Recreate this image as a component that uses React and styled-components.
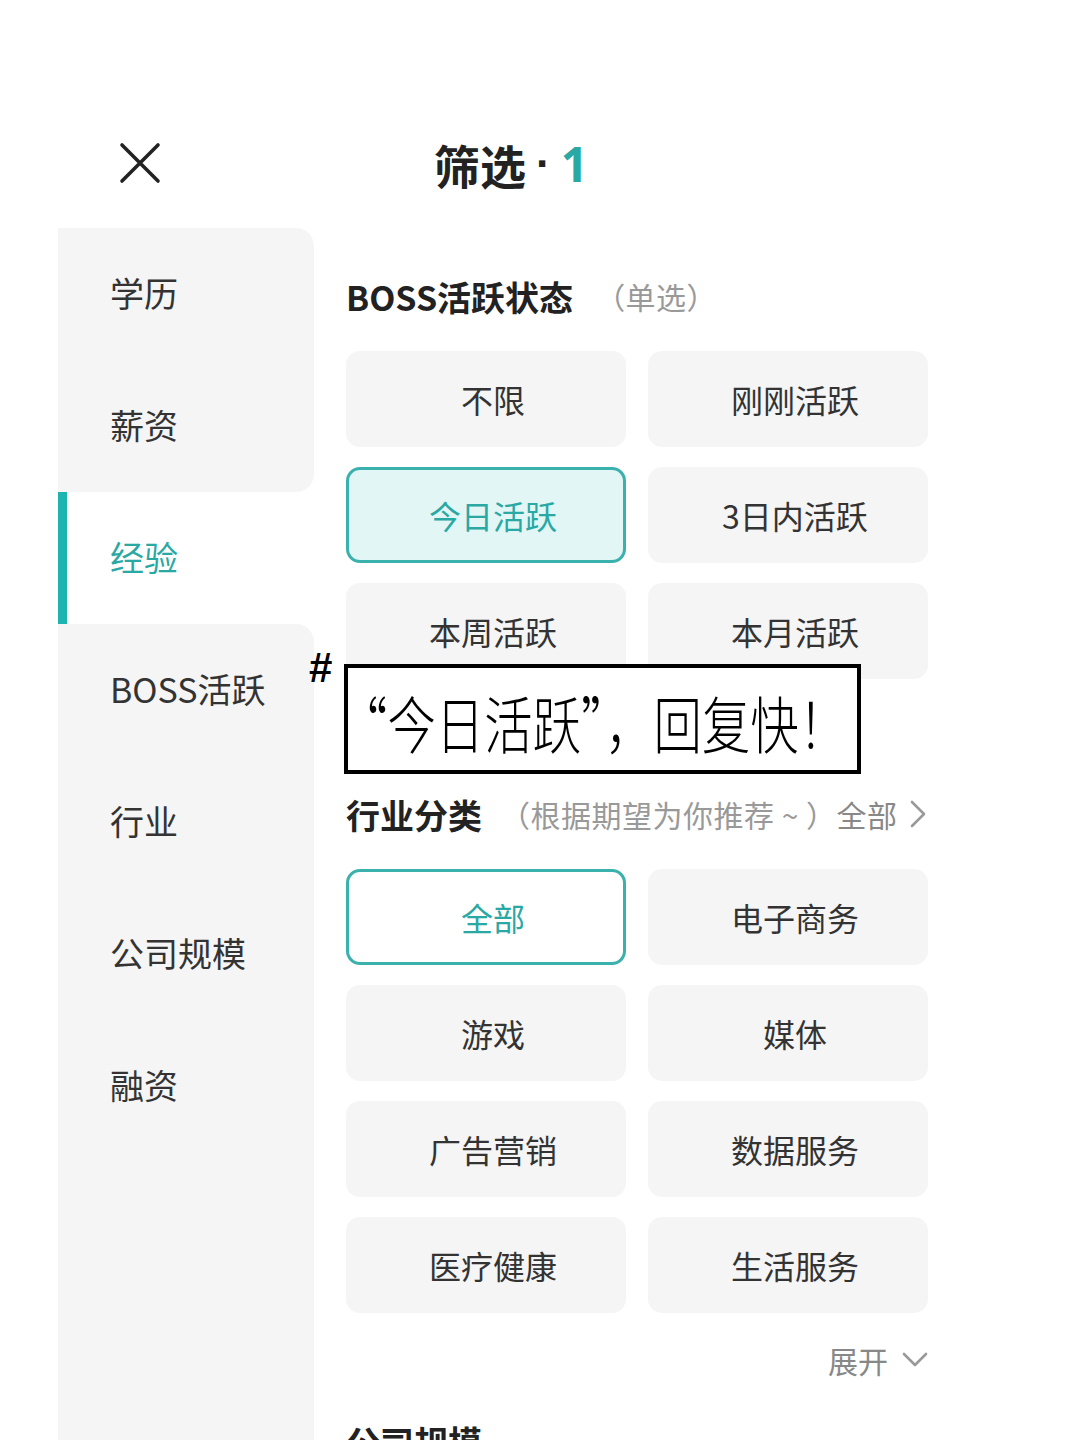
import React from "react";
import styled, { createGlobalStyle } from "styled-components";

const TEAL = "#2aa8a4";
const TEAL_BAR = "#1db3ae";

const Global = createGlobalStyle`
  html, body { margin: 0; padding: 0; background: #fff; }
  body {
    font-family: "Noto Sans CJK SC", "Noto Sans", sans-serif;
    height: 1440px;
    overflow: hidden;
  }
`;

const Page = styled.div`
  width: 1080px;
  height: 1440px;
  overflow: hidden;
  display: flex;
  flex-direction: column;
`;

const Header = styled.header`
  height: 228px;
  box-sizing: border-box;
  padding: 136px 0 0 118px;
  display: flex;
  align-items: flex-start;
`;

const CloseBtn = styled.button`
  width: 44px;
  height: 44px;
  padding: 0;
  border: none;
  background: none;
  display: flex;
  align-items: center;
  justify-content: center;
  margin-top: 5px;
`;

const Title = styled.h1`
  margin: 0 0 0 272px;
  font-size: 46px;
  line-height: 56px;
  font-weight: 700;
  color: #222;
  display: flex;
  align-items: center;
`;

const Dot = styled.span`
  margin: 0 10px 0 10px;
  font-family: "Liberation Sans", sans-serif;
  font-size: 44px;
`;

const Count = styled.span`
  color: ${TEAL};
  font-family: "Noto Sans", sans-serif;
  font-weight: 700;
  font-size: 48px;
`;

const Body = styled.div`
  flex: 1;
  display: flex;
  padding-left: 58px;
  min-height: 0;
`;

const Sidebar = styled.nav`
  width: 256px;
  display: flex;
  flex-direction: column;
  flex-shrink: 0;
`;

const NavItem = styled.div`
  height: 132px;
  box-sizing: border-box;
  display: flex;
  align-items: center;
  padding: 0 0 4px 52px;
  font-size: 34px;
  color: ${(p) => (p.$active ? TEAL : "#333")};
  background: ${(p) => (p.$active ? "#fff" : "#f5f5f5")};
  border-top-right-radius: ${(p) => (p.$roundTop ? "18px" : "0")};
  border-bottom-right-radius: ${(p) => (p.$roundBottom ? "18px" : "0")};
  position: relative;
  &::before {
    content: "";
    display: ${(p) => (p.$active ? "block" : "none")};
    position: absolute;
    left: 0;
    top: 0;
    bottom: 0;
    width: 9px;
    background: ${TEAL_BAR};
  }
`;

const NavFiller = styled.div`
  flex: 1;
  background: #f5f5f5;
`;

const Content = styled.main`
  width: 582px;
  margin-left: 32px;
  position: relative;
  padding-top: 47px;
`;

const Section = styled.section`
  margin-bottom: ${(p) => p.$mb || "0"};
`;

const SectionHead = styled.div`
  display: flex;
  align-items: center;
  height: 42px;
  margin-bottom: 34px;
`;

const SectionTitle = styled.h2`
  margin: 0;
  font-size: 34px;
  font-weight: 700;
  color: #222;
  white-space: nowrap;
`;

const Hint = styled.span`
  margin-left: ${(p) => p.$ml || "20px"};
  font-size: 30px;
  color: #999;
  white-space: nowrap;
  display: flex;
  align-items: center;
  letter-spacing: 0.5px;
`;

const HintLink = styled.span`
  color: #888;
  display: inline-flex;
  align-items: center;
  gap: 12px;
`;

const Grid = styled.div`
  display: grid;
  grid-template-columns: 280px 280px;
  column-gap: 22px;
  row-gap: 20px;
`;

const Option = styled.button`
  height: 96px;
  box-sizing: border-box;
  border-radius: 14px;
  border: 3px solid ${(p) => (p.$selected ? "#3bb1ad" : "transparent")};
  background: ${(p) =>
    p.$selected ? (p.$tint ? "#e2f6f5" : "#fff") : "#f5f5f5"};
  color: ${(p) => (p.$selected ? TEAL : "#333")};
  font-family: "Noto Sans CJK SC", "Noto Sans", sans-serif;
  font-size: 32px;
  padding: 0 0 0 14px;
  display: flex;
  align-items: center;
  justify-content: center;
`;

const ExpandRow = styled.div`
  display: flex;
  justify-content: flex-end;
  align-items: center;
  gap: 14px;
  height: 42px;
  margin-top: 26px;
  font-size: 30px;
  color: #888;
`;

const NextSection = styled.div`
  margin-top: 36px;
`;

const Note = styled.div`
  position: absolute;
  left: -2px;
  top: 436px;
  width: 517px;
  height: 110px;
  box-sizing: border-box;
  border: 4px solid #000;
  background: #fff;
  display: flex;
  align-items: center;
`;

const NoteText = styled.span`
  display: inline-block;
  margin-left: -9px;
  font-family: "Noto Sans CJK SC", sans-serif;
  font-weight: 300;
  font-size: 48.4px;
  line-height: 1;
  color: #000;
  white-space: nowrap;
  transform: scaleY(1.28);
  transform-origin: center;
  margin-top: 6px;
`;

const Hash = styled.span`
  position: absolute;
  left: -37px;
  top: 416px;
  font-family: "Liberation Sans", sans-serif;
  font-weight: 700;
  font-size: 42px;
  color: #000;
`;

const XIcon = () => (
  <svg width="44" height="44" viewBox="0 0 44 44">
    <path d="M4 4 L40 40 M40 4 L4 40" stroke="#222" strokeWidth="3.6" strokeLinecap="round" />
  </svg>
);

const Chevron = ({ dir }) =>
  dir === "right" ? (
    <svg width="16" height="28" viewBox="0 0 16 28">
      <path d="M2 2 L14 14 L2 26" fill="none" stroke="#999" strokeWidth="2.6" strokeLinecap="round" strokeLinejoin="round" />
    </svg>
  ) : (
    <svg width="26" height="16" viewBox="0 0 26 16">
      <path d="M2 2 L13 13 L24 2" fill="none" stroke="#999" strokeWidth="2.6" strokeLinecap="round" strokeLinejoin="round" />
    </svg>
  );

const navItems = ["学历", "薪资", "经验", "BOSS活跃", "行业", "公司规模", "融资"];
const activeIndex = 2;

const activity = ["不限", "刚刚活跃", "今日活跃", "3日内活跃", "本周活跃", "本月活跃"];
const industries = ["全部", "电子商务", "游戏", "媒体", "广告营销", "数据服务", "医疗健康", "生活服务"];

export default function App() {
  return (
    <Page>
      <Global />
      <Header>
        <CloseBtn aria-label="关闭">
          <XIcon />
        </CloseBtn>
        <Title>
          筛选<Dot>·</Dot>
          <Count>1</Count>
        </Title>
      </Header>
      <Body>
        <Sidebar>
          {navItems.map((n, i) => (
            <NavItem
              key={n}
              $active={i === activeIndex}
              $roundTop={i === 0 || i === activeIndex + 1}
              $roundBottom={i === activeIndex - 1}
            >
              {n}
            </NavItem>
          ))}
          <NavFiller />
        </Sidebar>
        <Content>
          <Section $mb="114px">
            <SectionHead>
              <SectionTitle>BOSS活跃状态</SectionTitle>
              <Hint $ml="22px">（单选）</Hint>
            </SectionHead>
            <Grid>
              {activity.map((a) => (
                <Option key={a} $selected={a === "今日活跃"} $tint>
                  {a}
                </Option>
              ))}
            </Grid>
          </Section>
          <Section>
            <SectionHead>
              <SectionTitle>行业分类</SectionTitle>
              <Hint $ml="18px">
                （根据期望为你推荐 ~ ）
                <HintLink>
                  全部
                  <Chevron dir="right" />
                </HintLink>
              </Hint>
            </SectionHead>
            <Grid>
              {industries.map((a) => (
                <Option key={a} $selected={a === "全部"}>
                  {a}
                </Option>
              ))}
            </Grid>
            <ExpandRow>
              展开
              <Chevron dir="down" />
            </ExpandRow>
          </Section>
          <NextSection>
            <SectionTitle>公司规模</SectionTitle>
          </NextSection>
          <Hash>#</Hash>
          <Note>
            <NoteText>“今日活跃”，回复快！</NoteText>
          </Note>
        </Content>
      </Body>
    </Page>
  );
}
